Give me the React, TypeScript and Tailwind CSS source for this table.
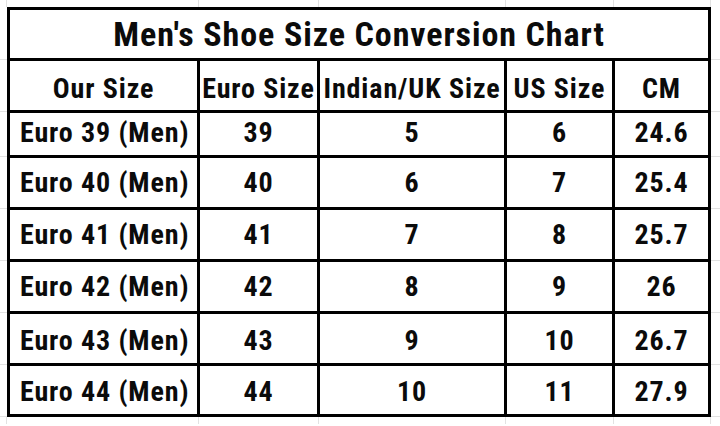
import React from "react";

const font = { fontFamily: '"Roboto Condensed", Roboto, "Liberation Sans", sans-serif' };

const rows = [
    ["Euro 39 (Men)", "39", "5", "6", "24.6"],
    ["Euro 40 (Men)", "40", "6", "7", "25.4"],
    ["Euro 41 (Men)", "41", "7", "8", "25.7"],
    ["Euro 42 (Men)", "42", "8", "9", "26"],
    ["Euro 43 (Men)", "43", "9", "10", "26.7"],
    ["Euro 44 (Men)", "44", "10", "11", "27.9"],
];

const heads = ["Our Size", "Euro Size", "Indian/UK Size", "US Size", "CM"];

// bottom padding per body row, so text sits where the sheet put it
const rowPad = ["pb-[8px]", "pb-[10px]", "pb-[10px]", "pb-[10px]", "pb-[8px]", "pb-[8px]"];

// spreadsheet gridline segments outside the chart
const colStrip = ["w-[7px]", "w-[192px]", "w-[120px]", "w-[187px]", "w-[108px]", "w-[97px]"];
const rowStrip = ["h-[53px]", "h-[52px]", "h-[45px]", "h-[52px]", "h-[52px]", "h-[52px]", "h-[52px]", "h-[52px]"];

const ColStrip = () => (
    <div className="flex h-[7px] shrink-0">
        {colStrip.map((w, i) => (
            <div key={i} className={`${w} h-full border-r border-[#e2e2e2]`}/>
        ))}
        <div className="flex-1"/>
    </div>
);

const RowStrip = ({className}: {className: string}) => (
    <div className={`flex flex-col ${className}`}>
        {rowStrip.map((h, i) => (
            <div key={i} className={`${h} w-full border-b border-[#e2e2e2]`}/>
        ))}
    </div>
);

export default function App() {
    return (
        <div className="w-[720px] h-[426px] bg-white overflow-hidden flex flex-col text-[#0b0b0b]" style={font}>
            <ColStrip/>
            <div className="flex">
                <RowStrip className="w-[7px] shrink-0"/>
                <div className="grid grid-cols-[187px_117px_184px_105px_93px] grid-rows-[48px_49px_42px_49px_49px_49px_49px_48px] gap-[3px] bg-black p-[3px] shrink-0">
                    <div className="col-span-5 bg-white flex items-center justify-center text-[34px] font-bold leading-none tracking-[0.9px]">
                        Men's Shoe Size Conversion Chart
                    </div>
                    {heads.map((h) => (
                        <div key={h} className="bg-white flex items-end justify-center pb-[7px] text-[28px] font-bold leading-[28px] tracking-[0.9px] whitespace-nowrap">
                            {h}
                        </div>
                    ))}
                    {rows.map((r, ri) =>
                        r.map((c, ci) => (
                            <div
                                key={ri + "-" + ci}
                                className={`bg-white flex items-end text-[28px] font-bold leading-[28px] tracking-[0.9px] whitespace-nowrap ${ci === 0 ? "justify-start pl-[10px]" : "justify-center"} ${rowPad[ri]}`}
                            >
                                {c}
                            </div>
                        ))
                    )}
                </div>
                <RowStrip className="flex-1"/>
            </div>
            <ColStrip/>
        </div>
    );
}
